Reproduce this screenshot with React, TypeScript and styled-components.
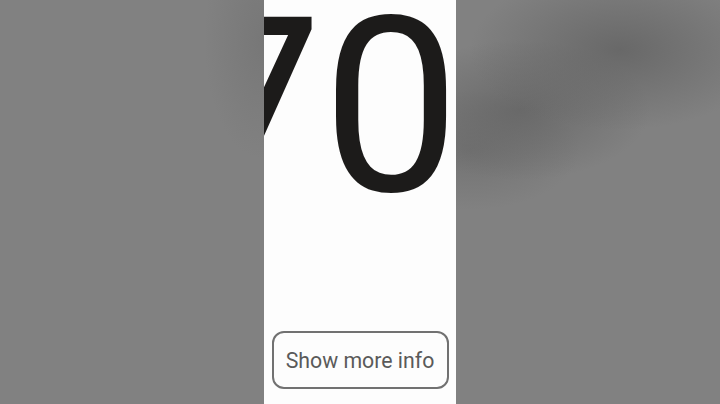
import React from 'react'
import styled, { createGlobalStyle } from 'styled-components'

const GlobalStyle = createGlobalStyle`
    html, body {
        margin: 0;
        padding: 0;
        height: 100%;
    }
    body {
        font-family: Roboto, "Liberation Sans", sans-serif;
        background-color: #818181;
        background-image:
            radial-gradient(ellipse 150px 80px at 620px 50px, rgba(96, 96, 96, 0.75), rgba(96, 96, 96, 0) 100%),
            radial-gradient(ellipse 130px 70px at 520px 110px, rgba(96, 96, 96, 0.7), rgba(96, 96, 96, 0) 100%),
            radial-gradient(ellipse 110px 60px at 470px 150px, rgba(96, 96, 96, 0.45), rgba(96, 96, 96, 0) 100%),
            radial-gradient(ellipse 60px 120px at 264px 40px, rgba(100, 100, 100, 0.35), rgba(100, 100, 100, 0) 100%);
        overflow: hidden;
    }
    #root {
        height: 100%;
    }
`

const Page = styled.div`
    display: flex;
    justify-content: center;
    height: 100vh;
`

const Panel = styled.div`
    display: flex;
    flex-direction: column;
    align-items: center;
    box-sizing: border-box;
    width: 192px;
    height: 100%;
    background: #fdfdfd;
    overflow: hidden;
`

const Counter = styled.div`
    align-self: stretch;
    display: flex;
    justify-content: flex-end;
    margin-top: -15px;
    margin-right: -4px;
    font-size: 245px;
    line-height: 1;
    color: #1c1b1a;
    white-space: nowrap;
`

const Spacer = styled.div`
    flex: 1;
`

const InfoButton = styled.button`
    box-sizing: border-box;
    width: 177px;
    height: 58px;
    margin-bottom: 15px;
    border: 2.5px solid #717171;
    border-radius: 12px;
    background: transparent;
    font-family: Roboto, "Liberation Sans", sans-serif;
    font-size: 21.3px;
    color: #5a5a5a;
    padding: 0;
    cursor: pointer;
`

export default function App() {
    return (
        <>
            <GlobalStyle />
            <Page>
                <Panel>
                    <Counter>70</Counter>
                    <Spacer />
                    <InfoButton>Show more info</InfoButton>
                </Panel>
            </Page>
        </>
    )
}
